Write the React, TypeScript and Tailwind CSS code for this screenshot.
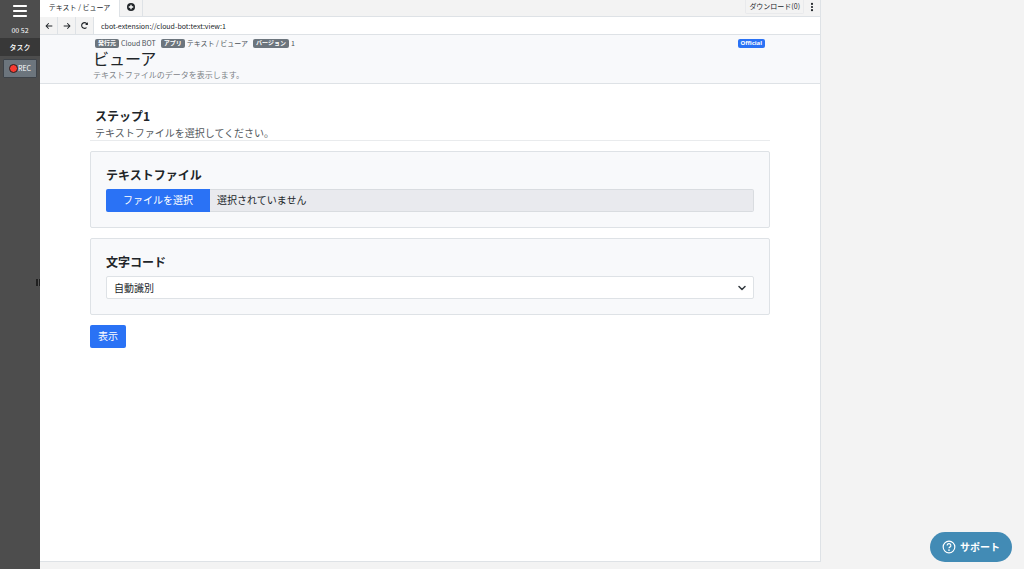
import { useState, type ReactNode } from "react";
import { FaArrowLeft, FaArrowRight, FaBars, FaEllipsisVertical } from "react-icons/fa6";
import { FaRedoAlt } from "react-icons/fa";

function Badge({ children }: { children: ReactNode }) {
  return (
    <span className="flex h-[9px] items-center rounded-xs bg-[#6c757d] px-[3px] text-[6px] leading-none font-bold text-white">
      {children}
    </span>
  );
}

function Sidebar() {
  return (
    <aside className="relative flex w-10 shrink-0 flex-col items-center bg-[#4d4d4d] text-white">
      <button type="button" aria-label="メニュー" className="flex h-[22px] w-full items-center justify-center">
        <FaBars className="size-4" />
      </button>
      <time className="flex h-4 items-center text-[7px] leading-none">00 52</time>
      <h2 className="flex h-[18px] w-full items-center justify-center bg-[#383838] text-[7px] leading-none font-medium">
        タスク
      </h2>
      <button
        type="button"
        className="mt-[3px] flex h-[19px] w-[34px] items-center justify-center rounded-[1px] border border-[#3e4349] bg-[#6c757d] text-[7px] leading-none"
      >
        <span className="size-[9px] rounded-full border border-[#222] bg-[#f83a30]" />
        REC
      </button>
      <div className="absolute top-[279px] right-0 flex h-[7px] w-1 justify-center bg-[#202020]">
        <span className="w-px bg-[#555]" />
      </div>
    </aside>
  );
}

function TabBar() {
  return (
    <div className="flex h-[17px] border-b border-[#dee2e6]">
      <div className="z-10 -mb-px flex w-[80px] items-center justify-center border-r border-[#dee2e6] bg-white pb-0.5 text-[7px] leading-none">
        テキスト / ビューア
      </div>
      <button
        type="button"
        aria-label="タブを追加"
        className="flex w-[23px] items-center justify-center border-r border-[#dee2e6] pb-0.5"
      >
        <svg viewBox="0 0 16 16" className="size-2">
          <circle cx="8" cy="8" r="8" fill="#212529" />
          <path d="M8 3.5v9M3.5 8h9" stroke="white" strokeWidth="2.6" />
        </svg>
      </button>
      <div className="ml-auto flex items-start">
        <button
          type="button"
          className="flex h-[14px] items-center rounded-b-xs border border-t-0 border-[#e9eaec] px-[3px] pb-px text-[7px] leading-none"
        >
          ダウンロード(0)
        </button>
        <button type="button" aria-label="その他" className="flex h-[13px] w-4 items-center justify-center">
          <FaEllipsisVertical className="size-[10px]" />
        </button>
      </div>
    </div>
  );
}

function AddressBar() {
  const button = "flex w-[18px] items-center justify-center border-r border-[#dee2e6]";
  return (
    <div className="flex h-[18px] border-b border-[#dee2e6]">
      <button type="button" aria-label="戻る" className={button}>
        <FaArrowLeft className="size-2" />
      </button>
      <button type="button" aria-label="進む" className={button}>
        <FaArrowRight className="size-2" />
      </button>
      <button type="button" aria-label="再読み込み" className={button}>
        <FaRedoAlt className="size-[7px]" />
      </button>
      <input
        aria-label="アドレス"
        defaultValue="cbot-extension://cloud-bot:text:view:1"
        className="min-w-0 flex-1 bg-white px-[7px] text-[7px] leading-none outline-none"
      />
    </div>
  );
}

function AppHeader() {
  return (
    <header className="h-[49px] border-b border-[#dee2e6] bg-[#f8f9fb] px-[53px] pt-[3px]">
      <div className="flex h-[10px] items-center gap-[5px] px-0.5 text-[7px] leading-none text-[#495057]">
        <span className="flex items-center gap-0.5">
          <Badge>発行元</Badge>Cloud BOT
        </span>
        <span className="flex items-center gap-0.5">
          <Badge>アプリ</Badge>テキスト / ビューア
        </span>
        <span className="flex items-center gap-0.5">
          <Badge>バージョン</Badge>1
        </span>
        <span className="ml-auto flex h-[9px] items-center rounded-xs bg-[#2a72f5] px-[3px] font-['Noto_Sans',sans-serif] text-[6px] leading-none font-bold text-white">
          Official
        </span>
      </div>
      <h1 className="text-[16px] leading-5">ビューア</h1>
      <p className="text-[8px] leading-[14px] text-[#7d8388]">テキストファイルのデータを表示します。</p>
    </header>
  );
}

export default function App() {
  const [fileName, setFileName] = useState("選択されていません");
  const card = "mt-[10px] rounded-xs border border-[#dee2e6] bg-[#f8f9fb] px-[15px] pt-[13px] pb-[15px]";
  const title = "mb-1 block text-[12px] leading-5 font-bold";
  return (
    <div className="flex h-screen overflow-hidden bg-[#f3f3f3] font-['Noto_Sans_CJK_JP',sans-serif] text-[#212529]">
      <Sidebar />
      <div className="mr-[203px] mb-[7px] flex min-w-0 flex-1 flex-col border-r border-b border-[#dee2e6]">
        <TabBar />
        <AddressBar />
        <main className="flex-1 bg-white">
          <AppHeader />
          <form className="px-[50px] pt-[22px]" onSubmit={(e) => e.preventDefault()}>
            <div className="border-b border-[#e9ebed] px-[5px]">
              <h2 className="text-[12px] leading-5 font-bold">ステップ1</h2>
              <p className="text-[10px] leading-[14px] text-[#53585d]">テキストファイルを選択してください。</p>
            </div>
            <section className={card}>
              <label htmlFor="file" className={title}>
                テキストファイル
              </label>
              <label
                htmlFor="file"
                className="relative flex h-[23px] cursor-pointer overflow-hidden rounded-xs bg-[#e9eaee] text-[10px] leading-[22px]"
              >
                <input
                  id="file"
                  type="file"
                  className="sr-only"
                  onChange={(e) => setFileName(e.target.files?.[0]?.name ?? "選択されていません")}
                />
                <span className="w-[104px] bg-[#2a72f5] text-center text-white">ファイルを選択</span>
                <span className="flex-1 rounded-r-xs border border-l-0 border-[#d9dce0] px-[7px] leading-5">
                  {fileName}
                </span>
              </label>
            </section>
            <section className={card}>
              <label htmlFor="encoding" className={title}>
                文字コード
              </label>
              <div className="relative">
                <select
                  id="encoding"
                  className="block h-[23px] w-full appearance-none rounded-xs border border-[#dee2e6] bg-white px-[7px] text-[10px]"
                >
                  <option>自動識別</option>
                </select>
                <svg
                  viewBox="0 0 16 16"
                  className="pointer-events-none absolute top-2 right-2 size-2 fill-none stroke-[#343a40] stroke-3"
                >
                  <path d="m2 5 6 6 6-6" strokeLinecap="round" strokeLinejoin="round" />
                </svg>
              </div>
            </section>
            <button
              type="submit"
              className="mt-[10px] block rounded-xs bg-[#2a72f5] px-2 pb-px text-[10px] leading-[22px] text-white"
            >
              表示
            </button>
          </form>
        </main>
      </div>
      <button
        type="button"
        className="fixed right-3 bottom-[7px] flex h-[30px] w-[82px] items-center justify-center gap-1 rounded-full bg-[#428bb5] pb-px text-[10px] font-bold text-white"
      >
        <svg viewBox="0 0 24 24" className="size-[14px] fill-none stroke-current stroke-2">
          <circle cx="12" cy="12" r="10" />
          <path d="M8.8 9.4a3.2 3.2 0 1 1 4.6 2.8c-.9.5-1.4 1-1.4 2.1" />
          <circle cx="12" cy="17.3" r=".6" />
        </svg>
        サポート
      </button>
    </div>
  );
}
